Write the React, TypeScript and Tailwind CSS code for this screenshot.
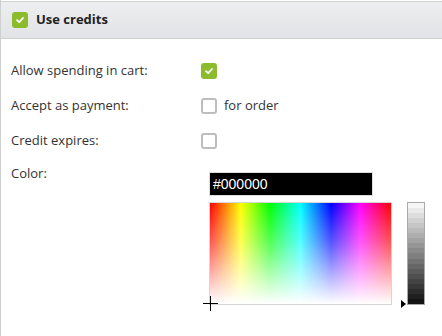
import React from "react";

function GreenCheck({ size = 16 }: { size?: number }) {
  return (
    <div
      className="flex items-center justify-center rounded-[3px] bg-[#8cbb2d]"
      style={{ width: size, height: size }}
    >
      <svg width="10" height="10" viewBox="0 0 10 10">
        <path d="M2 5.2 L4.2 7.2 L8 3" stroke="white" strokeWidth="1.8" fill="none" strokeLinecap="round" strokeLinejoin="round" />
      </svg>
    </div>
  );
}

function EmptyCheck() {
  return <div className="w-[16px] h-[16px] rounded-[3px] border-2 border-[#bdbdbd] bg-white" />;
}

const steps = Array.from({ length: 20 }, (_, i) => {
  const v = Math.round(245 - (i * (245 - 20)) / 19);
  return `rgb(${v},${v},${v})`;
});

export default function App() {
  return (
    <div className="w-[442px] h-[336px] bg-white border-l border-[#cfcfcf] pt-px font-['Open_Sans',sans-serif] text-[13px] text-[#333] overflow-hidden">
      <div className="h-[38px] border-t border-b border-[#cfd2cf] bg-[linear-gradient(to_bottom,#eceeef,#e1e3e6)] flex items-center pl-[11px] gap-[8px]">
        <GreenCheck size={16} />
        <span className="font-bold text-[13px] text-[#222]">Use credits</span>
      </div>
      <div className="pt-[14px]">
        <div className="flex h-[35px] items-center">
          <div className="w-[200px] pl-[10px]">Allow spending in cart:</div>
          <GreenCheck size={16} />
        </div>
        <div className="flex h-[35px] items-center">
          <div className="w-[200px] pl-[10px]">Accept as payment:</div>
          <EmptyCheck />
          <span className="ml-[7px]">for order</span>
        </div>
        <div className="flex h-[35px] items-center">
          <div className="w-[200px] pl-[10px]">Credit expires:</div>
          <EmptyCheck />
        </div>
        <div className="flex items-start">
          <div className="w-[200px] pl-[10px] h-[32px] flex items-center">Color:</div>
          <div className="ml-[8px] mt-[14px] flex flex-col">
            <div className="w-[164px] h-[24px] bg-black border border-[#dcdcdc] flex items-center pl-[3px] font-['Liberation_Sans',Arial,sans-serif] text-[14px] text-white">
              #000000
            </div>
            <div className="mt-[6px] flex items-end">
              <div className="relative w-[183px] h-[103px] border border-[#d6d6d6] bg-[linear-gradient(to_top,#ffffff,rgba(255,255,255,0.35)_60%,rgba(255,255,255,0)),linear-gradient(to_right,#ff0000,#ffff00_17%,#00ff00_33%,#00ffff_50%,#0000ff_67%,#ff00ff_83%,#ff0000)]">
                <div className="absolute left-[-7px] bottom-[0px] w-[15px] h-px bg-black" />
                <div className="absolute left-[0px] bottom-[-7px] w-px h-[15px] bg-black" />
              </div>
              <div className="relative ml-[15px] w-[18px] h-[103px] border border-[#a8a8a8] flex flex-col">
                {steps.map((c, i) => (
                  <div key={i} className="flex-1" style={{ backgroundColor: c }} />
                ))}
                <div className="absolute left-[-7px] bottom-[-4px] w-0 h-0 border-y-[4px] border-y-transparent border-l-[5px] border-l-black" />
              </div>
            </div>
          </div>
        </div>
      </div>
    </div>
  );
}
